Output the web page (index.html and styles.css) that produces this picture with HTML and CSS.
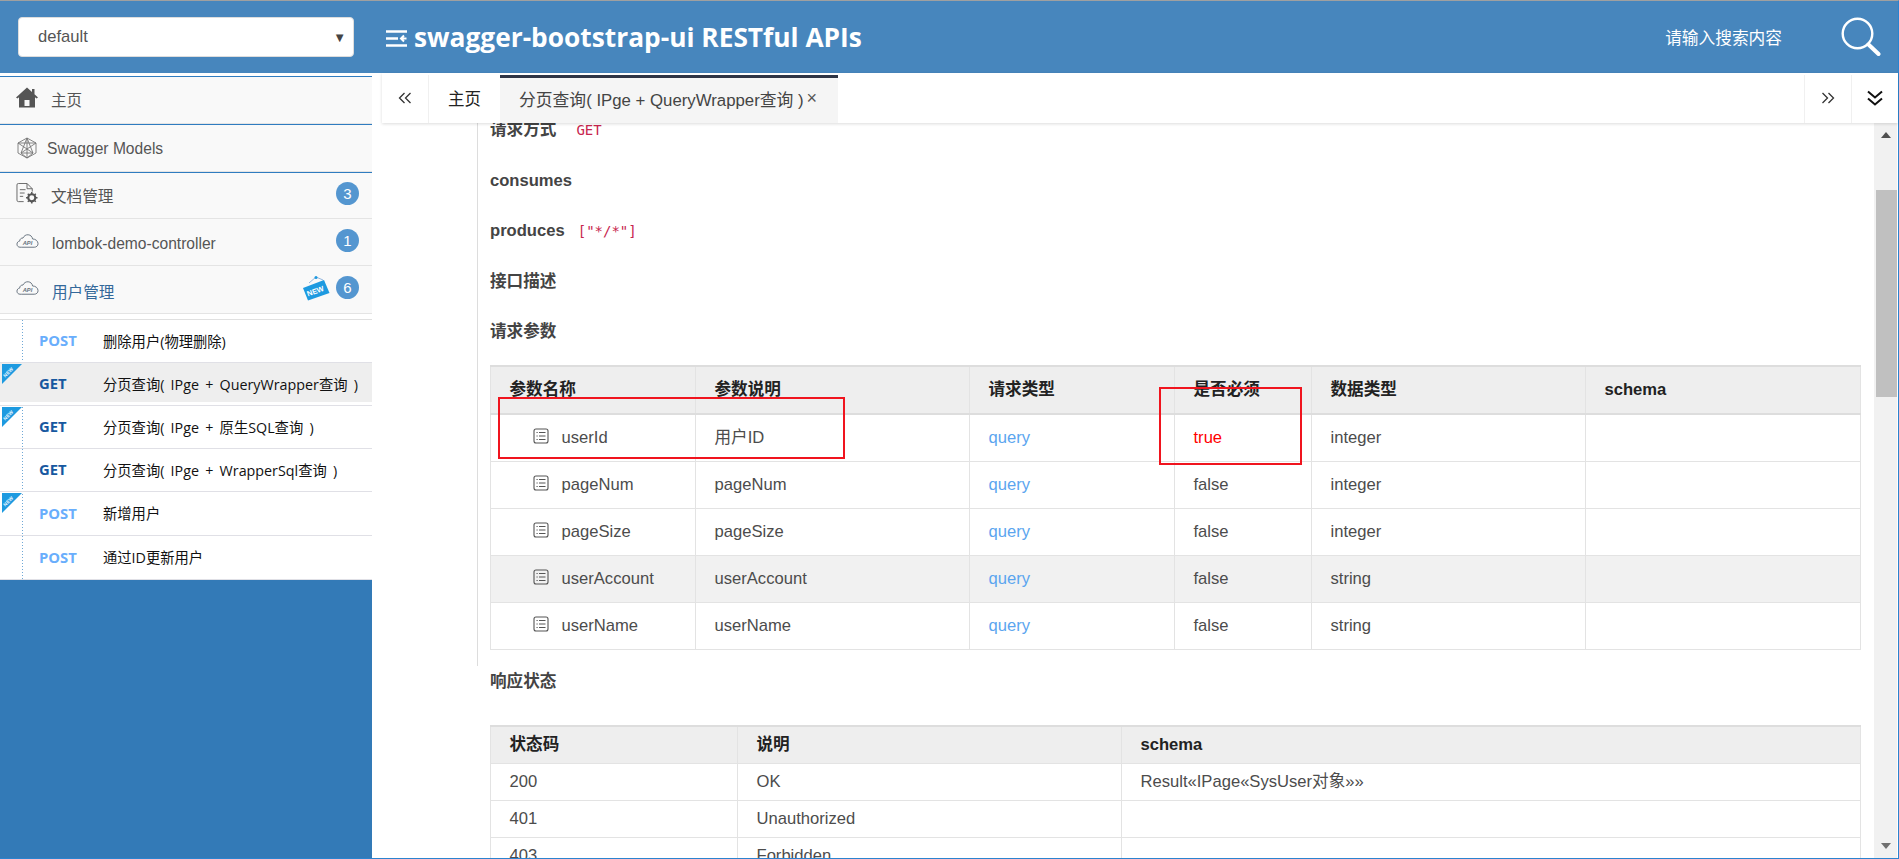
FILE: index.html
```html
<!DOCTYPE html>
<html lang="zh">
<head>
<meta charset="utf-8">
<title>swagger-bootstrap-ui RESTful APIs</title>
<link rel="stylesheet" href="styles.css">
</head>
<body>
<svg class="defs" width="0" height="0" aria-hidden="true">
  <symbol id="cloud" viewBox="0 0 24 16">
    <path d="M5.5 14.5H4.2C2.3 14.5 1 13 1 11.300 1 9.600 2.200 8.300 3.800 8.100 3.900 6.100 5.400 4.700 7.300 4.900 8.300 2.600 10.400 1.300 12.700 1.500 15.200 1.700 17 3.500 17.300 5.900 20.300 5.800 23 8 23 10.800 23 13 21.300 14.500 19 14.500Z" fill="none" stroke="#66727e" stroke-width="1"/>
  </symbol>
  <symbol id="list" viewBox="0 0 16 16">
    <rect x="1" y="1" width="14" height="14" rx="2" fill="none" stroke="#555" stroke-width="1.100"/>
    <path d="M6 4.500H12.500M6 8H12.500M6 11.500H12.500M3.500 4.500H4.700M3.500 8H4.700M3.500 11.500H4.700" stroke="#555" stroke-width="1"/>
  </symbol>
</svg>
<div class="app">
  <header class="topbar">
    <div class="brand-slot">
      <div class="select"><span>default</span><span class="caret">▼</span></div>
    </div>
    <svg class="menu-icon" viewBox="0 0 21 17" aria-hidden="true">
      <path d="M0 1.500H21M0 8.500H12M0 15.500H21" stroke="#fff" stroke-width="2.400" fill="none"/>
      <path d="M20.500 8.500H15.500M18 5.500L15 8.500 18 11.500" stroke="#fff" stroke-width="2" fill="none"/>
    </svg>
    <h1 class="title">swagger-bootstrap-ui RESTful APIs</h1>
    <div class="search-hint">请输入搜索内容</div>
    <svg class="search-icon" viewBox="0 0 40 40" aria-hidden="true">
      <circle cx="16.500" cy="16.500" r="14.800" fill="none" stroke="#fff" stroke-width="2.400"/>
      <path d="M27.500 27.500L37.500 37" stroke="#fff" stroke-width="4" stroke-linecap="round"/>
    </svg>
  </header>

  <div class="body">
    <aside class="sidebar">
      <ul class="nav">
        <li class="nav-item accent">
          <svg class="nav-icon" viewBox="0 0 22 21" aria-hidden="true"><path fill-rule="evenodd" d="M11 .5L16 5V2H18.500V7.300L22 10.500 20.500 11.500 19 10.300V20.500H3V10.300L1.500 11.500 0 10.500ZM8.500 13V19H13.500V13Z" fill="#555"/></svg>
          <span class="nav-label">主页</span>
        </li>
        <li class="nav-item accent models">
          <svg class="nav-icon small" viewBox="0 0 20 22" aria-hidden="true"><path d="M10 1L19 6V16L10 21 1 16V6ZM10 1L4 16H16ZM1 6L16 16M19 6L4 16M1 6H19M10 1V21M4 16L10 21 16 16" fill="none" stroke="#777" stroke-width=".9"/></svg>
          <span class="nav-label">Swagger Models</span>
        </li>
        <li class="nav-item accent">
          <svg class="nav-icon" viewBox="0 0 23 22" aria-hidden="true"><path d="M8 19.500H2.500C1.500 19.500 1 19 1 18V2C1 1 1.500.5 2.500.5H11.500L17 6V9M11.500.5V6H17M4 7H10M4 10.500H9M4 14H7.500" fill="none" stroke="#666" stroke-width="1"/><circle cx="16.500" cy="15.500" r="3.700" fill="none" stroke="#555" stroke-width="2.200"/><path d="M16.500 9.500V21.500M10.500 15.500H22.500M12.300 11.300L20.700 19.700M20.700 11.300L12.300 19.700" stroke="#555" stroke-width="1.500" stroke-dasharray="2 8.300" fill="none"/></svg>
          <span class="nav-label">文档管理</span>
          <span class="badge">3</span>
        </li>
        <li class="nav-item plain">
          <svg class="nav-icon cloud" viewBox="0 0 24 16" aria-hidden="true"><use href="#cloud"/><text x="12" y="12" text-anchor="middle" class="cloud-text">API</text></svg>
          <span class="nav-label">lombok-demo-controller</span>
          <span class="badge">1</span>
        </li>
        <li class="nav-item plain current">
          <svg class="nav-icon cloud" viewBox="0 0 24 16" aria-hidden="true"><use href="#cloud"/><text x="12" y="12" text-anchor="middle" class="cloud-text">API</text></svg>
          <span class="nav-label">用户管理</span>
          <svg class="new-tag" viewBox="0 0 28 26" aria-hidden="true">
            <path d="M14 2L7 8M14 2L21 5" stroke="#7aa6d8" stroke-width=".8" fill="none"/>
            <circle cx="14" cy="2.500" r="1.500" fill="#1d9ae0"/>
            <path d="M1 13L22 5 27.500 18 6 25.500Z" fill="#1d9ae0"/>
            <text x="14.300" y="18.500" text-anchor="middle" transform="rotate(-20 14.300 18.500)" class="tag-text">NEW</text>
          </svg>
          <span class="badge">6</span>
        </li>
      </ul>
      <ul class="sub">
        <li class="sub-row"><span class="method post">POST</span><span class="sub-text">删除用户(物理删除)</span></li>
        <li class="sub-row active"><svg class="corner" viewBox="0 0 20 20" aria-hidden="true"><path d="M0 0H20L0 20Z" fill="#1d9ae0"/><text x="7.500" y="9.500" text-anchor="middle" transform="rotate(-45 7.500 9.500)" class="ribbon-text">NEW</text></svg><span class="method get">GET</span><span class="sub-text">分页查询( IPge + QueryWrapper查询 )</span></li>
        <li class="sub-row"><svg class="corner" viewBox="0 0 20 20" aria-hidden="true"><path d="M0 0H20L0 20Z" fill="#1d9ae0"/><text x="7.500" y="9.500" text-anchor="middle" transform="rotate(-45 7.500 9.500)" class="ribbon-text">NEW</text></svg><span class="method get">GET</span><span class="sub-text">分页查询( IPge + 原生SQL查询 )</span></li>
        <li class="sub-row"><span class="method get">GET</span><span class="sub-text">分页查询( IPge + WrapperSql查询 )</span></li>
        <li class="sub-row tall"><svg class="corner" viewBox="0 0 20 20" aria-hidden="true"><path d="M0 0H20L0 20Z" fill="#1d9ae0"/><text x="7.500" y="9.500" text-anchor="middle" transform="rotate(-45 7.500 9.500)" class="ribbon-text">NEW</text></svg><span class="method post">POST</span><span class="sub-text">新增用户</span></li>
        <li class="sub-row tall"><span class="method post">POST</span><span class="sub-text">通过ID更新用户</span></li>
      </ul>
      <div class="sidebar-fill"></div>
    </aside>

    <main class="main">
      <nav class="tabs">
        <div class="tab-btn left-btn">
          <svg class="chev" viewBox="0 0 14 12" aria-hidden="true"><path d="M6.500 1L1.500 6 6.500 11M12.500 1L7.500 6 12.500 11" fill="none" stroke="#333" stroke-width="1.300"/></svg>
        </div>
        <div class="tab">主页</div>
        <div class="tab tab-active"><span>分页查询( IPge + QueryWrapper查询 )</span><span class="tab-close">×</span></div>
        <div class="tab-spacer"></div>
        <div class="tab-btn right-btn">
          <svg class="chev" viewBox="0 0 14 12" aria-hidden="true"><path d="M1.500 1L6.500 6 1.500 11M7.500 1L12.500 6 7.500 11" fill="none" stroke="#333" stroke-width="1.300"/></svg>
        </div>
        <div class="tab-btn down-btn">
          <svg class="chev-down" viewBox="0 0 16 16" aria-hidden="true"><path d="M1 1.500L8 7.500 15 1.500M1 8.500L8 14.500 15 8.500" fill="none" stroke="#111" stroke-width="2"/></svg>
        </div>
      </nav>
      <div class="pane">
        <div class="scroll">
          <section class="block">
            <div class="field"><strong>请求方式</strong><code class="code gap-a">GET</code></div>
            <div class="field"><strong>consumes</strong></div>
            <div class="field"><strong>produces</strong><code class="code gap-b">["*/*"]</code></div>
            <div class="field"><strong>接口描述</strong></div>
            <div class="field"><strong>请求参数</strong></div>
            <table class="grid params">
              <colgroup><col class="p1"><col class="p2"><col class="p3"><col class="p4"><col class="p5"><col class="p6"></colgroup>
              <thead><tr><th>参数名称</th><th>参数说明</th><th>请求类型</th><th>是否必须</th><th>数据类型</th><th>schema</th></tr></thead>
              <tbody>
                <tr><td><span class="pname"><svg class="list-icon" aria-hidden="true"><use href="#list"/></svg>userId</span></td><td>用户ID</td><td class="link">query</td><td class="req">true</td><td>integer</td><td></td></tr>
                <tr><td><span class="pname"><svg class="list-icon" aria-hidden="true"><use href="#list"/></svg>pageNum</span></td><td>pageNum</td><td class="link">query</td><td>false</td><td>integer</td><td></td></tr>
                <tr><td><span class="pname"><svg class="list-icon" aria-hidden="true"><use href="#list"/></svg>pageSize</span></td><td>pageSize</td><td class="link">query</td><td>false</td><td>integer</td><td></td></tr>
                <tr class="hover"><td><span class="pname"><svg class="list-icon" aria-hidden="true"><use href="#list"/></svg>userAccount</span></td><td>userAccount</td><td class="link">query</td><td>false</td><td>string</td><td></td></tr>
                <tr><td><span class="pname"><svg class="list-icon" aria-hidden="true"><use href="#list"/></svg>userName</span></td><td>userName</td><td class="link">query</td><td>false</td><td>string</td><td></td></tr>
              </tbody>
            </table>
            <div class="mark mark-a"></div>
            <div class="mark mark-b"></div>
          </section>
          <div class="field resp"><strong>响应状态</strong></div>
          <table class="grid status">
            <colgroup><col class="s1"><col class="s2"><col class="s3"></colgroup>
            <thead><tr><th>状态码</th><th>说明</th><th>schema</th></tr></thead>
            <tbody>
              <tr><td>200</td><td>OK</td><td>Result«IPage«SysUser对象»»</td></tr>
              <tr><td>401</td><td>Unauthorized</td><td></td></tr>
              <tr><td>403</td><td>Forbidden</td><td></td></tr>
            </tbody>
          </table>
        </div>
        <div class="scrollbar">
          <span class="arrow up"></span>
          <div class="thumb"></div>
          <span class="arrow down"></span>
        </div>
      </div>
    </main>
  </div>
</div>
</body>
</html>
```

FILE: styles.css
```css
* { box-sizing: border-box; }
html, body { margin: 0; height: 100%; overflow: hidden; }
body {
  font-family: "Liberation Sans", "Noto Sans CJK SC", sans-serif;
  color: #444;
  background: #fff;
}
.defs { position: absolute; }
.cloud-text { font: italic bold 6px "Liberation Sans", sans-serif; fill: #66727e; }
.ribbon-text { font: bold 5px "Liberation Sans", sans-serif; fill: #e6f5ff; }
.tag-text { font: bold 7.500px "Liberation Sans", sans-serif; fill: #fff; }

.app {
  height: 100vh;
  display: flex;
  flex-direction: column;
  border-top: 1px solid #a0a0a0;
  border-right: 1px solid #2b83cf;
  border-bottom: 1px solid #2b83cf;
}

/* top bar */
.topbar {
  flex: 0 0 72px;
  background: #4786bd;
  display: flex;
  align-items: center;
  color: #fff;
}
.brand-slot { flex: 0 0 386px; padding: 0 32px 0 18px; }
.select {
  height: 40px;
  background: #fff;
  border: 1px solid #ddd;
  border-radius: 4px;
  padding: 0 7px 0 19px;
  display: flex;
  align-items: center;
  justify-content: space-between;
  font-size: 16.600px;
  color: #555;
}
.caret { font-size: 13px; color: #444; }
.menu-icon { width: 21px; height: 17px; margin: 3px 7px 0 0; flex: none; }
.title {
  margin: 0;
  font: 700 26.300px "Open Sans", sans-serif;
  color: #fff;
  flex: 1;
}
.search-hint { font-size: 16.700px; margin-right: 59px; }
.search-icon { width: 40px; height: 40px; margin-right: 17px; margin-bottom: 1px; flex: none; }

/* layout */
.body { flex: 1; min-height: 0; display: flex; }
.sidebar { flex: 0 0 372px; display: flex; flex-direction: column; background: #fff; padding-top: 3px; }
.sidebar-fill { flex: 1; background: #337ab7; }

/* nav */
.nav, .sub { list-style: none; margin: 0; padding: 0; }
.nav-item {
  height: 47px;
  background: #f9f9f9;
  border-bottom: 1px solid #e4e4e4;
  display: flex;
  align-items: center;
  padding: 0 13px 0 16px;
  font-size: 15.600px;
  color: #555;
  position: relative;
}
.nav-item.accent { height: 48px; border-top: 1px solid #2f7cc0; }
.nav-item.accent:nth-child(3) { height: 47px; }
.nav-item.current { height: 48px; color: #33689a; }
.nav-icon { width: 22px; height: 21px; flex: none; margin-right: 13px; margin-top: -5px; }
.nav-icon.small { width: 20px; height: 22px; margin: 0 10px 0 1px; }
.nav-icon.cloud { width: 23px; height: 16px; margin-right: 13px; margin-top: -3px; }
.nav-label { flex: 1; padding-bottom: 2px; }
.models .nav-label { padding: 2px 0 0; }
.plain .nav-label { padding: 3px 0 0; }
.badge {
  width: 23px;
  height: 23px;
  border-radius: 50%;
  background: #5496d0;
  color: #fff;
  font-size: 15px;
  display: flex;
  align-items: center;
  justify-content: center;
  margin-top: -4px;
}
.new-tag { width: 28px; height: 26px; margin: -3px 6px 0 0; flex: none; }

/* sub list */
.sub {
  margin-top: 5px;
  border-top: 1px solid #e0e0e0;
  background-image: linear-gradient(#6fa8d6 50%, transparent 50%);
  background-size: 1px 3px;
  background-repeat: repeat-y;
  background-position: 22px 0;
}
.sub-row {
  height: 43px;
  border-bottom: 1px solid #e0e0e6;
  display: flex;
  align-items: center;
  padding: 0 0 2px 39px;
  position: relative;
  font: 14.300px "Open Sans", "Noto Sans CJK SC", sans-serif;
  color: #111;
}
.sub-row.tall { height: 44px; }
.sub-row.active {
  background: linear-gradient(#eee 39px, #fff 39px);
}
.method { flex: 0 0 64px; font-weight: 700; font-size: 14.800px; }
.method.post { color: #69aefc; }
.method.get { color: #17589f; }
.sub-text { white-space: nowrap; word-spacing: 2.500px; }
.corner { position: absolute; left: 2px; top: 1px; width: 20px; height: 20px; }

/* main */
.main { flex: 1; min-width: 0; display: flex; flex-direction: column; }
.tabs {
  flex: 0 0 50px;
  margin-left: 10px;
  display: flex;
  background: #fff;
  box-shadow: 0 1px 3px rgba(0,0,0,.14);
  position: relative;
  z-index: 2;
  padding-top: 2px;
  font-size: 16.500px;
  color: #333;
}
.tab-btn { width: 47px; display: flex; align-items: center; justify-content: center; }
.left-btn { border-right: 1px solid #f0f0f0; padding-bottom: 2px; }
.right-btn { border-left: 1px solid #f0f0f0; padding-bottom: 2px; }
.down-btn { border-left: 1px solid #f0f0f0; padding-bottom: 2px; }
.chev { width: 14px; height: 12px; }
.chev-down { width: 16px; height: 16px; }
.tab { padding: 0 19px 3px; display: flex; align-items: center; color: #222; }
.tab-active {
  width: 338px;
  background: #f5f5f5;
  border-top: 3px solid #2f3545;
  padding: 0 0 4px 19px;
  font-size: 16.800px;
  color: #444;
  white-space: nowrap;
}
.tab-close { margin-left: 3px; font-size: 18px; color: #555; }
.tab-spacer { flex: 1; }

/* content */
.pane { flex: 1; min-height: 0; display: flex; }
.scroll { flex: 1; min-width: 0; overflow: hidden; padding: 0 14px 0 105px; font-size: 16.600px; line-height: 20px; }
.block {
  margin-top: -18px;
  border-left: 1px solid #ddd;
  padding: 0 0 16px 12px;
  position: relative;
}
.field { height: 50.500px; display: flex; align-items: center; color: #444; }
.field strong { font-weight: 700; }
.code { font: 14px "DejaVu Sans Mono", monospace; color: #c7254e; }
.gap-a { margin-left: 20px; }
.gap-b { margin-left: 13px; }
.resp { padding-left: 13px; height: 44px; margin-top: -6px; }

.grid { border-collapse: collapse; table-layout: fixed; width: 1370px; }
.params { margin-top: 7.500px; }
.status { margin-left: 13px; margin-top: 21px; }
.grid th, .grid td { border: 1px solid #e3e3e3; padding: 0 0 0 18.500px; text-align: left; white-space: nowrap; }
.grid td { color: #4c4c4c; }
.grid th { background: #eee; color: #222; font-weight: 700; border-top: 2px solid #ddd; }
.params th { height: 48px; border-bottom: 2px solid #ddd; }
.params td { height: 47px; }
.status th { height: 38px; }
.status td { height: 37px; }
.hover td { background: #f1f1f1; }
.grid td.link { color: #5ba5ef; }
.grid td.req { color: #f00; }
.pname { display: flex; align-items: center; padding-left: 23px; }
.list-icon { width: 16px; height: 16px; margin-right: 13px; margin-top: -3px; flex: none; }
.p1 { width: 205px; } .p2 { width: 274px; } .p3 { width: 205px; }
.p4 { width: 137px; } .p5 { width: 274px; } .p6 { width: 275px; }
.s1 { width: 247px; } .s2 { width: 384px; } .s3 { width: 739px; }

/* annotations drawn over the table */
.mark { position: absolute; border: 2px solid #f0141e; }
.mark-a { left: 20px; top: 292px; width: 347px; height: 62px; }
.mark-b { left: 681px; top: 282px; width: 143px; height: 78px; }

/* scrollbar */
.scrollbar {
  flex: 0 0 24px;
  background: linear-gradient(90deg, #f1f1f1 23px, #fff 23px);
  padding-left: 2px;
  position: relative;
}
.thumb { position: absolute; left: 2px; top: 67px; width: 21px; height: 207px; background: #c0c0c0; }
.arrow { position: absolute; left: 7px; width: 0; height: 0; border-left: 5.500px solid transparent; border-right: 5.500px solid transparent; }
.arrow.up { top: 9px; border-bottom: 6px solid #505050; }
.arrow.down { bottom: 9px; border-top: 6px solid #707070; }
```
